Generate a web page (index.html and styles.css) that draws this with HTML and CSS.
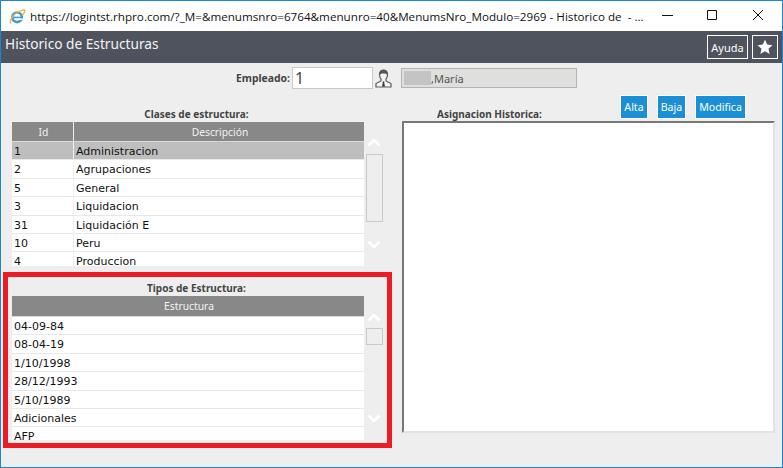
FILE: index.html
```html
<!DOCTYPE html>
<html lang="es">
<head>
    <meta charset="UTF-8">
    <title>Historico de Estructuras</title>
    <link rel="stylesheet" href="styles.css">
</head>
<body>
<div class="ventana">
    <div class="barra-ie">
        <svg class="logo-ie" width="17" height="17" viewBox="0 0 22 22">
            <circle cx="10.500" cy="12" r="6.200" fill="none" stroke="#3a9be0" stroke-width="3.400"/>
            <path d="M5 11.200h11.500v2H5z" fill="#3a9be0"/>
            <path d="M10 13.500h8v1.800h-8z" fill="#fff"/>
            <path d="M2.500 20C-.5 17 6 8 12 5c4-2 8-3.500 8.500-1.500.4 1.700-1.500 4-3 6" fill="none" stroke="#f3b530" stroke-width="1.800"/>
        </svg>
        <span class="url">https://logintst.rhpro.com/?_M=&amp;menumsnro=6764&amp;menunro=40&amp;MenumsNro_Modulo=2969 - Historico de&nbsp; - ...</span>
        <svg class="controles" width="112" height="12" viewBox="0 0 112 12">
            <path d="M0 5.500h11" stroke="#111" fill="none"/>
            <path d="M45.500 .5h9v9h-9z" stroke="#111" fill="none"/>
            <path d="M91 0l10 10M101 0L91 10" stroke="#111" fill="none"/>
        </svg>
    </div>

    <div class="cabecera">
        <span class="titulo">Historico de Estructuras</span>
        <a class="btn-cab">Ayuda</a>
        <a class="btn-cab btn-estrella">
            <svg width="16" height="16" viewBox="0 0 16 16"><path d="M8 .8l2.200 4.800 5.200.6-3.900 3.500 1.100 5.200L8 12.300l-4.600 2.600 1.100-5.200L.6 6.200l5.200-.6z" fill="#fff"/></svg>
        </a>
    </div>

    <div class="fila-empleado">
        <label class="etiqueta etiqueta-emp" for="empleado">Empleado:</label>
        <input class="campo" id="empleado" type="text" value="1">
        <svg class="persona" width="17" height="19" viewBox="0 0 17 19">
            <path d="M1 18v-3.500l5-2.500v-2C5 9 4.500 7 4.500 5.500 4.500 2.500 6 1 8.500 1s4 1.500 4 4.500C12.500 7 12 9 11 10v2l5 2.500V18z" fill="#f4f4f4" stroke="#5a5a5a" stroke-width="1.200"/>
            <path d="M4.800 5.500C4.500 2.500 6 1 8.500 1s4 1.500 3.700 4.500C11 4 6 4 4.800 5.500z" fill="#555"/>
            <path d="M7.600 12.500h1.800l-.2 1.500.8 3.500H7l.8-3.500z" fill="#333"/>
        </svg>
        <div class="nombre"><span class="borroso"></span>,María</div>
    </div>

    <div class="contenido">
        <div class="col-izq">
            <div class="etiqueta centro">Clases de estructura:</div>
            <div class="lista lista-clases">
                <div class="tabla">
                    <div class="fila encabezado"><div class="c-id">Id</div><div class="c-desc">Descripción</div></div>
                    <div class="fila activa"><div class="c-id">1</div><div class="c-desc">Administracion</div></div>
                    <div class="fila"><div class="c-id">2</div><div class="c-desc">Agrupaciones</div></div>
                    <div class="fila"><div class="c-id">5</div><div class="c-desc">General</div></div>
                    <div class="fila"><div class="c-id">3</div><div class="c-desc">Liquidacion</div></div>
                    <div class="fila"><div class="c-id">31</div><div class="c-desc">Liquidación E</div></div>
                    <div class="fila"><div class="c-id">10</div><div class="c-desc">Peru</div></div>
                    <div class="fila"><div class="c-id">4</div><div class="c-desc">Produccion</div></div>
                </div>
                <div class="scroll">
                    <svg class="flecha" width="14" height="9" viewBox="0 0 14 9"><path d="M1.500 7.500L7 2l5.500 5.500" fill="none" stroke="#fff" stroke-width="2.500"/></svg>
                    <div class="thumb thumb-clases"></div>
                    <svg class="flecha flecha-baja" width="14" height="9" viewBox="0 0 14 9"><path d="M1.500 1.500L7 7l5.500-5.500" fill="none" stroke="#fff" stroke-width="2.500"/></svg>
                </div>
            </div>

            <div class="etiqueta centro sub">Tipos de Estructura:</div>
            <div class="lista lista-tipos">
                <div class="tabla">
                    <div class="fila encabezado alto"><div class="c-unica">Estructura</div></div>
                    <div class="fila"><div class="c-full">04-09-84</div></div>
                    <div class="fila"><div class="c-full">08-04-19</div></div>
                    <div class="fila"><div class="c-full">1/10/1998</div></div>
                    <div class="fila"><div class="c-full">28/12/1993</div></div>
                    <div class="fila"><div class="c-full">5/10/1989</div></div>
                    <div class="fila"><div class="c-full">Adicionales</div></div>
                    <div class="fila"><div class="c-full">AFP</div></div>
                </div>
                <div class="scroll scroll-tipos">
                    <svg class="flecha" width="14" height="9" viewBox="0 0 14 9"><path d="M1.500 7.500L7 2l5.500 5.500" fill="none" stroke="#fff" stroke-width="2.500"/></svg>
                    <div class="thumb thumb-tipos"></div>
                    <svg class="flecha flecha-baja" width="14" height="9" viewBox="0 0 14 9"><path d="M1.500 1.500L7 7l5.500-5.500" fill="none" stroke="#fff" stroke-width="2.500"/></svg>
                </div>
            </div>
        </div>

        <div class="col-der">
            <div class="acciones">
                <span class="etiqueta asignacion">Asignacion Historica:</span>
                <a class="btn-azul btn-alta">Alta</a>
                <a class="btn-azul btn-baja">Baja</a>
                <a class="btn-azul btn-modifica">Modifica</a>
            </div>
            <div class="marco"></div>
        </div>
    </div>

    <div class="resaltado"></div>
</div>
</body>
</html>
```

FILE: styles.css
```css
html, body {
    margin: 0;
    padding: 0;
}
body {
    font-family: "DejaVu Sans", sans-serif;
    color: #111;
}
.ventana {
    position: relative;
    box-sizing: border-box;
    width: 783px;
    height: 468px;
    border: 1px solid #1a86d8;
    background-color: #eeeeee;
    overflow: hidden;
}
.barra-ie {
    display: flex;
    align-items: center;
    height: 30px;
    padding-left: 8px;
    background-color: white;
}
.logo-ie {
    flex: none;
}
.url {
    flex: none;
    width: 631px;
    margin-left: 4px;
    font-family: "Open Sans", sans-serif;
    font-size: 11.66px;
    white-space: nowrap;
}
.controles {
    flex: none;
    margin-left: 1px;
}
.cabecera {
    display: flex;
    align-items: center;
    gap: 4px;
    height: 32px;
    padding: 0 4px;
    background-color: #4f535e;
}
.titulo {
    flex: 1;
    margin-top: -8px;
    font-family: "Noto Sans", sans-serif;
    font-size: 13.7px;
    color: #f4f4f4;
}
.btn-cab {
    box-sizing: border-box;
    display: flex;
    align-items: center;
    justify-content: center;
    width: 41px;
    height: 24px;
    border: 1px solid white;
    font-family: "Noto Sans", sans-serif;
    font-size: 11px;
    color: white;
}
.btn-estrella {
    width: 26px;
}
.fila-empleado {
    display: flex;
    align-items: center;
    height: 22px;
    margin-top: 4px;
    padding-left: 235px;
}
.etiqueta {
    font-family: "Noto Sans", sans-serif;
    font-size: 10px;
    font-weight: bold;
    color: #444;
}
.etiqueta-emp {
    flex: none;
    width: 56px;
    font-size: 10.4px;
}
.campo {
    box-sizing: border-box;
    width: 81px;
    height: 22px;
    padding: 0 2px;
    border: 1px solid #c8c8c8;
    background-color: white;
    font-family: "Noto Sans", sans-serif;
    font-size: 16px;
    color: #444;
}
.persona {
    margin-left: 2px;
}
.nombre {
    box-sizing: border-box;
    display: flex;
    align-items: center;
    width: 176px;
    height: 20px;
    margin-left: 9px;
    padding-left: 2px;
    border: 1px solid #b4b4b4;
    background-color: #dfdfdd;
    font-family: "Noto Sans", sans-serif;
    font-size: 11px;
    color: #555;
}
.borroso {
    width: 27px;
    height: 14px;
    background-color: #c4c4c4;
}
.contenido {
    display: flex;
    margin-top: 6px;
}
.col-izq {
    flex: none;
    width: 379px;
    margin-left: 11px;
}
.centro {
    width: 369px;
    text-align: center;
}
.col-izq .centro {
    height: 20px;
    margin-top: 12px;
}
.col-izq .sub {
    box-sizing: border-box;
    height: 18px;
    margin-top: 13px;
    padding-top: 2px;
}
.lista {
    display: flex;
    height: 144px;
    margin-top: -5px;
}
.lista-tipos {
    margin-top: -1px;
}
.tabla {
    width: 352px;
    overflow: hidden;
}
.fila {
    box-sizing: border-box;
    display: flex;
    height: 18.4px;
    border-bottom: 1px solid #e8e8e8;
    background-color: white;
    font-size: 11px;
    line-height: 19px;
}
.fila > div {
    box-sizing: border-box;
    padding-left: 2px;
    overflow: hidden;
    white-space: nowrap;
}
.c-id {
    width: 62px;
    border-right: 1px solid #eeeeee;
}
.c-desc,
.c-full,
.c-unica {
    flex: 1;
}
.encabezado {
    height: 20px;
    border-bottom: 1px solid #d8d8d8;
    background-color: #888888;
    color: #f2f2f2;
    font-family: "Noto Sans", sans-serif;
    font-size: 10.3px;
    line-height: 21px;
    text-align: center;
}
.alto {
    height: 21px;
}
.activa {
    background-color: #bebebe;
}
.scroll {
    box-sizing: border-box;
    display: flex;
    flex-direction: column;
    align-items: center;
    width: 18px;
    margin-left: 1px;
    padding-top: 16px;
}
.scroll-tipos {
    padding-top: 17px;
}
.thumb {
    box-sizing: border-box;
    flex: none;
    width: 17px;
    margin-top: 7px;
    border: 1px solid #c9c9c9;
}
.thumb-clases {
    height: 68px;
}
.thumb-tipos {
    height: 17px;
    margin-top: 6px;
}
.flecha {
    flex: none;
}
.flecha-baja {
    margin-top: 18px;
}
.thumb-tipos + .flecha-baja {
    margin-top: 69px;
}
.col-der {
    flex: none;
    width: 373px;
    margin-left: 11px;
}
.acciones {
    display: flex;
    align-items: flex-end;
    height: 24px;
}
.asignacion {
    width: 183px;
    margin-left: 35px;
    margin-bottom: -2px;
}
.btn-azul {
    box-sizing: border-box;
    height: 24px;
    margin-right: 9px;
    border: 1px solid white;
    background-color: #1a8fd6;
    font-family: "Noto Sans", sans-serif;
    font-size: 10.6px;
    line-height: 22px;
    text-align: center;
    color: white;
}
.btn-alta {
    width: 28px;
}
.btn-baja {
    width: 29px;
}
.btn-modifica {
    width: 51px;
}
.marco {
    box-sizing: border-box;
    height: 312px;
    margin-top: 2px;
    border: 2px solid;
    border-color: #777 #e2e2e2 #e2e2e2 #777;
    background-color: white;
}
/* recuadro rojo puesto encima de la captura */
.resaltado {
    position: absolute;
    left: 2px;
    top: 271px;
    width: 379px;
    height: 166px;
    border: 5px solid #ed1c24;
}
```
